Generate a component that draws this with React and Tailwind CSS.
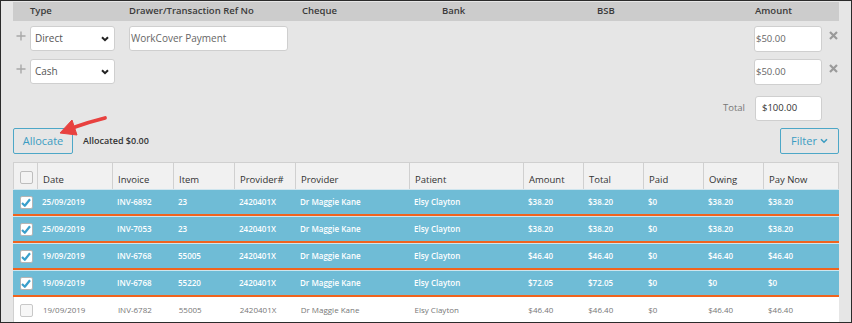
import { useState } from 'react'

const cols = [
  { key: 'date', label: 'Date', w: 'w-[75px]' },
  { key: 'inv', label: 'Invoice', w: 'w-[61px]' },
  { key: 'item', label: 'Item', w: 'w-[61px]' },
  { key: 'provNo', label: 'Provider#', w: 'w-[61px]' },
  { key: 'prov', label: 'Provider', w: 'w-[114px]' },
  { key: 'pat', label: 'Patient', w: 'w-[114px]' },
  { key: 'amt', label: 'Amount', w: 'w-[60px]' },
  { key: 'total', label: 'Total', w: 'w-[60px]' },
  { key: 'paid', label: 'Paid', w: 'w-[60px]' },
  { key: 'owing', label: 'Owing', w: 'w-[60px]' },
  { key: 'pay', label: 'Pay Now', w: 'w-[75px]' },
]

const invoices = [
  { sel: true, date: '25/09/2019', inv: 'INV-6892', item: '23', provNo: '2420401X', prov: 'Dr Maggie Kane', pat: 'Elsy Clayton', amt: '$38.20', total: '$38.20', paid: '$0', owing: '$38.20', pay: '$38.20' },
  { sel: true, date: '25/09/2019', inv: 'INV-7053', item: '23', provNo: '2420401X', prov: 'Dr Maggie Kane', pat: 'Elsy Clayton', amt: '$38.20', total: '$38.20', paid: '$0', owing: '$38.20', pay: '$38.20' },
  { sel: true, date: '19/09/2019', inv: 'INV-6768', item: '55005', provNo: '2420401X', prov: 'Dr Maggie Kane', pat: 'Elsy Clayton', amt: '$46.40', total: '$46.40', paid: '$0', owing: '$46.40', pay: '$46.40' },
  { sel: true, date: '19/09/2019', inv: 'INV-6768', item: '55220', provNo: '2420401X', prov: 'Dr Maggie Kane', pat: 'Elsy Clayton', amt: '$72.05', total: '$72.05', paid: '$0', owing: '$0', pay: '$0' },
  { sel: false, date: '19/09/2019', inv: 'INV-6782', item: '55005', provNo: '2420401X', prov: 'Dr Maggie Kane', pat: 'Elsy Clayton', amt: '$46.40', total: '$46.40', paid: '$0', owing: '$46.40', pay: '$46.40' },
]

function Plus() {
  return (
    <svg width="10" height="10" viewBox="0 0 10 10" className="mt-[5px]">
      <path d="M5 0.5v9M0.5 5h9" stroke="#a8a8a8" strokeWidth="1.4" />
    </svg>
  )
}

function Remove() {
  return (
    <svg width="9" height="9" viewBox="0 0 9 9" className="mt-[5px]">
      <path d="M1 1l7 7M8 1l-7 7" stroke="#9a9a9a" strokeWidth="2.2" />
    </svg>
  )
}

function Select({ value }) {
  return (
    <div className="flex h-[25px] w-[85px] items-center justify-between rounded-[3px] border border-[#cfcfcf] bg-white pl-[4px] pr-[5px] text-[10px] text-[#555]">
      <span>{value}</span>
      <svg width="8" height="6" viewBox="0 0 8 6">
        <path d="M1 1.2l3 3 3-3" fill="none" stroke="#222" strokeWidth="2" />
      </svg>
    </div>
  )
}

function Check({ on, head }) {
  return (
    <div className={`flex h-[13px] w-[13px] items-center justify-center rounded-[2px] border ${head ? 'border-[#bdbdbd] bg-[#f3f3f3]' : on ? 'border-[#b5b5b5] bg-white' : 'border-[#c8c8c8] bg-[#f7f7f7]'}`}>
      {on && (
        <svg width="10" height="9" viewBox="0 0 10 9">
          <path d="M1 5l2.8 2.8L9 1.2" fill="none" stroke="#3a9fcb" strokeWidth="2.2" strokeLinejoin="round" />
        </svg>
      )}
    </div>
  )
}

export default function App() {
  const [rows] = useState(invoices)

  return (
    <div className="relative h-[323px] w-[852px] overflow-hidden border border-[#2b2b2b] bg-[#e6e6e6] font-['Open_Sans',sans-serif]">
      {/* Payment lines */}
      <div className="mx-[12px] mt-[1px] flex h-[19px] items-center bg-[#cccccc] text-[9.5px] font-semibold text-[#3a3a3a]">
        <div className="w-[17px]" />
        <div className="w-[99px]">Type</div>
        <div className="w-[173px]">Drawer/Transaction Ref No</div>
        <div className="w-[140px]">Cheque</div>
        <div className="w-[155px]">Bank</div>
        <div className="w-[158px]">BSB</div>
        <div>Amount</div>
      </div>

      <div className="mx-[12px] mt-[5px] flex items-start">
        <div className="flex w-[17px] justify-center pr-[2px]"><Plus /></div>
        <Select value="Direct" />
        <div className="ml-[14px] flex h-[25px] w-[159px] items-center rounded-[3px] border border-[#cfcfcf] bg-white pl-[1px] text-[10px] text-[#666]">WorkCover Payment</div>
        <div className="flex-1" />
        <div className="flex h-[26px] w-[68px] items-center rounded-[3px] border border-[#cfcfcf] bg-white pl-[1px] text-[9.5px] text-[#666]">$50.00</div>
        <div className="flex w-[17px] justify-end pr-[1px]"><Remove /></div>
      </div>

      <div className="mx-[12px] mt-[7px] flex items-start">
        <div className="flex w-[17px] justify-center pr-[2px]"><Plus /></div>
        <Select value="Cash" />
        <div className="flex-1" />
        <div className="flex h-[26px] w-[68px] items-center rounded-[3px] border border-[#cfcfcf] bg-white pl-[1px] text-[9.5px] text-[#666]">$50.00</div>
        <div className="flex w-[17px] justify-end pr-[1px]"><Remove /></div>
      </div>

      <div className="mx-[12px] mt-[11px] flex items-center justify-end">
        <span className="mr-[10px] text-[9.5px] text-[#777]">Total</span>
        <div className="flex h-[25px] w-[67px] items-center rounded-[3px] border border-[#cfcfcf] bg-white pl-[6px] text-[9.5px] text-[#333]">$100.00</div>
        <div className="w-[17px]" />
      </div>

      {/* Allocate bar */}
      <div className="mx-[12px] mt-[7px] flex h-[26px] items-center">
        <button className="flex h-[26px] w-[60px] items-center justify-center rounded-[2px] border border-[#4da7c7] text-[11px] text-[#3b9cc2]">Allocate</button>
        <span className="ml-[10px] text-[9px] font-semibold text-[#333]">Allocated $0.00</span>
        <div className="flex-1" />
        <button className="flex h-[26px] w-[59px] items-center justify-center gap-[3px] rounded-[2px] border border-[#4da7c7] text-[11px] text-[#3b9cc2]">
          Filter
          <svg width="8" height="6" viewBox="0 0 8 6">
            <path d="M1 1.2l3 3 3-3" fill="none" stroke="#3b9cc2" strokeWidth="1.6" />
          </svg>
        </button>
      </div>

      {/* Invoice table */}
      <div className="mx-[12px] mt-[8px] border-t border-[#d0d0d0]">
        <div className="flex h-[26px] bg-[#f1f1f1] text-[9.5px] text-[#333]">
          <div className="flex w-[25px] items-end justify-center border-x border-[#d0d0d0] pb-[5px] pl-[1px]"><Check head /></div>
          {cols.map(c => (
            <div key={c.key} className={`${c.w} flex items-end border-r border-[#d0d0d0] pb-[2px] pl-[5px]`}>{c.label}</div>
          ))}
        </div>
        {rows.map((r, i) => (
          <div
            key={i}
            className={`flex items-center text-[8px] ${r.sel ? 'h-[27px] border-t border-[#cfe5ee] border-b-2 border-b-[#f0641e] bg-[#6fbcd6] font-semibold text-white' : 'h-[26px] border-l border-[#d0d0d0] bg-white text-[#777]'}`}
          >
            <div className="flex w-[25px] justify-center pl-[1px]"><Check on={r.sel} /></div>
            {cols.map(c => (
              <div key={c.key} className={`${c.w} pl-[4px]`}>{r[c.key]}</div>
            ))}
          </div>
        ))}
      </div>

      {/* Callout arrow */}
      <svg className="absolute left-[55px] top-[110px]" width="56" height="30" viewBox="0 0 56 30">
        <path d="M49 7 Q33 11 19 16" fill="none" stroke="#e8413f" strokeWidth="3.8" strokeLinecap="round" />
        <path d="M4 22 L21 24 L16 9 Z" fill="#e8413f" strokeLinejoin="round" stroke="#e8413f" strokeWidth="1" />
      </svg>
    </div>
  )
}
